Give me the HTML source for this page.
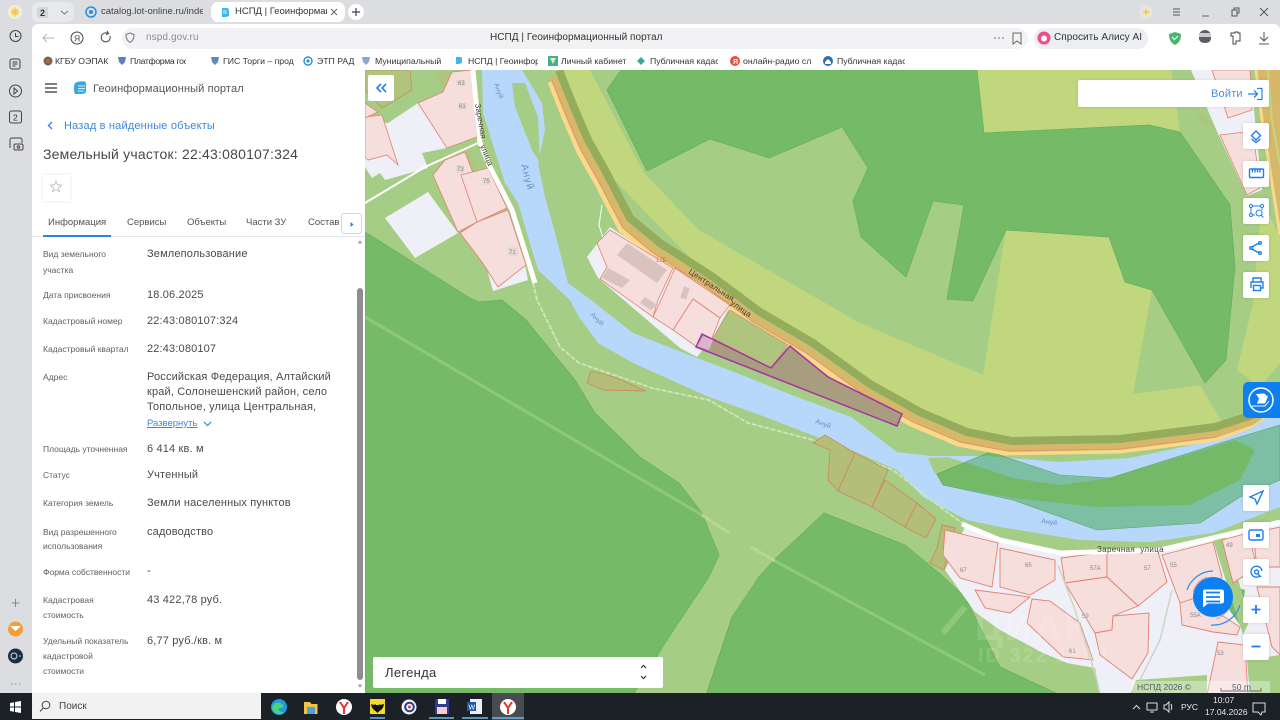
<!DOCTYPE html>
<html lang="ru"><head><meta charset="utf-8"><title>НСПД | Геоинформационный портал</title>
<style>
*{box-sizing:border-box}
html,body{margin:0;padding:0;width:1280px;height:720px;overflow:hidden;background:#dcdde1;font-family:"Liberation Sans","Noto Sans CJK SC",sans-serif}
svg{position:absolute;left:0;top:0;overflow:visible}
.t{position:absolute;white-space:nowrap;line-height:14px;height:14px}
.l{font-size:8.5px;color:#5b5f66;left:43px}
.v{font-size:11px;color:#4a4a4a;left:147px;letter-spacing:.16px;margin-top:1px}
.tab{font-size:9.5px;color:#4f5358;top:216px}
.bm{font-size:8.7px;color:#333;top:54px}
.btn{position:absolute;left:1243px;width:26px;height:26px;background:#fff;border-radius:2px;box-shadow:0 0 3px rgba(0,0,0,.15)}
.box{position:absolute;background:#fff}
</style></head><body>

<svg width="1280" height="720" viewBox="0 0 1280 720">
<rect x="365" y="70" width="915" height="625" fill="#a6cd86"/>
<!-- yellow-green -->
<polygon fill="#c0d77d" points="590,70 644,173 699,230 858,322 983,375 1006,230 1109,237 1125,282 1152,290 1133,394 1200,385 1224,425 1120,441 1010,443 900,405 700,268 600,165 555,70" />
<polygon fill="#c0d77d" points="977,70 1171,70 1180,132 1149,125 984,133"/>
<polygon fill="#c0d77d" points="1253,303 1237,370 1260,387 1280,363 1280,237 1262,200"/>
<!-- dark green upper -->
<polygon fill="#75bb67" stroke="#68ad5c" stroke-width=".7" points="607,90 621,70 977,70 984,133 1149,125 1180,132 1230,205 1235,267 1226,360 1205,383 1152,290 1125,282 1109,237 1006,230 973,301 947,299 964,205 933,201 906,277 861,237 853,201 868,168 842,127 769,158 710,139 647,171"/>
<!-- river -->
<polygon fill="#b8d8fb" points="482,70 522,70 542,103 545,130 538,163 545,197 555,233 568,283 591,300 633,333 694,357 729,370 797,397 851,417 897,452 930,456 985,456 1060,462 1130,458 1215,440 1280,405 1280,507 1213,533 1150,542 1080,540 1000,527 967,520 923,497 897,470 851,450 817,437 760,415 709,397 633,363 598,343 579,317 570,300 538,270 518,203 505,183 483,113"/>
<polygon fill="#a6cd86" points="512,83 525,83 538,117 540,163 532,150 515,107"/>
<polygon fill="#a6cd86" points="928,458 947,457 980,467 1013,478 1060,485 1110,478 1170,460 1235,440 1255,450 1240,480 1190,505 1097,507 1013,498 943,485 933,470"/>
<polygon fill="#39a344" fill-opacity=".47" stroke="#5aa55a" stroke-width=".6" points="937,474 990,452 1060,475 1110,478 1230,440 1280,425 1280,480 1240,497 1200,523 1097,530 1013,500 943,485"/>
<!-- road -->
<path fill="none" stroke="#fbd98a" stroke-width="5" d="M550,82L564,117 579,152 596,182 621,230 651,255 704,289 751,324 804,355 861,396 911,424 958,444 1005,453 1120,451 1215,439 1250,426 1280,405"/>
<path fill="none" stroke="#d7b76a" stroke-width="8" d="M554,77L568,112 583,147 600,177 625,225 655,250 708,284 755,319 808,350 865,391 915,419 962,439 1010,448 1120,446 1215,434 1252,421 1280,400"/>
<path fill="none" stroke="#94ac5c" stroke-width="8" d="M559,70L573,105 588,140 605,170 630,218 660,243 713,277 760,312 813,343 870,384 920,412 967,432 1012,441 1120,439 1215,427 1255,414 1280,393"/>
<path fill="none" stroke="#e58f6b" stroke-width=".7" d="M552,80L566,115 581,150 598,180 623,228 653,253 706,287 753,322 806,353 863,394 913,422 960,442 1008,451 1120,449 1215,437"/>
<!-- right road -->
<polygon fill="#d7b76a" points="1256,70 1280,70 1280,235 1270,170 1262,120"/>
<path fill="none" stroke="#fbd98a" stroke-width="3" d="M1256,70L1262,120 1270,170 1280,235"/>
<path fill="none" stroke="#c0d77d" stroke-width="2" d="M1268,70L1272,120 1280,165"/>
<!-- dark green left -->
<polygon fill="#75bb67" stroke="#68ad5c" stroke-width=".7" points="365,232 470,298 478,302 502,300 526,320 575,380 595,413 640,457 679,483 702,513 719,555 709,577 667,640 633,695 365,695"/>
<polygon fill="#75bb67" stroke="#68ad5c" stroke-width=".7" points="824,513 905,545 939,573 965,597 1000,667 1060,695 706,695 732,617 759,577 774,560"/>
<path stroke="#8fc87c" stroke-width="3" d="M365,317L702,515"/><path stroke="#b7d88f" stroke-width="3" d="M702,515L729,533"/>
<path stroke="#b7d88f" stroke-width="3" d="M751,547L775,561"/><path stroke="#8fc87c" stroke-width="3" d="M775,561L985,675"/>
<path stroke="#8fc87c" stroke-width="6" d="M965,607L943,633"/>
<path fill="none" stroke="#d2e4bb" stroke-width="1.8" stroke-dasharray="5 1.5" d="M530,270L537,300 560,347 579,363 652,388 709,400 748,423 813,440 893,470 935,503 962,523"/>
<!-- NW parcels -->
<polygon fill="#afc47d" stroke="#c98c5c" stroke-width=".8" points="365,90 382,108 412,90 410,70 365,70"/>
<polygon fill="#eff0f7" points="388,123 418,103 447,148 422,153 428,168 385,180 380,173 372,178 365,167 365,120"/>
<polygon fill="#eff0f7" points="385,218 428,192 458,233 415,258"/>
<polygon fill="#eff0f7" points="488,273 525,265 528,280 493,291"/>
<polygon fill="#afc47d" points="434,70 443,92 452,72"/>
<polygon fill="#afc47d" points="465,152 474,173 478,170 470,150"/>
<polygon fill="#afc47d" points="458,233 482,262 477,240"/>
<g fill="#f6dedd" stroke="#e2806f" stroke-width=".8">
<polygon points="365,117 382,115 398,165 387,155 368,160 365,157"/>
<polygon points="365,103 378,112 365,118"/>
<polygon points="418,103 443,92 452,72 472,70 477,137 447,148"/>
<polygon points="433,175 445,160 465,152 473,173 488,168 507,208 477,222 458,232"/>
<polygon points="461,175 488,168 507,208 477,222"/>
<polygon points="477,222 508,210 526,265 498,287 482,262 460,233"/>
</g>
<g fill="#e5d9d6"><rect x="456" y="80" width="9" height="6"/><rect x="458" y="103" width="9" height="7"/><rect x="456" y="165" width="8" height="8"/><rect x="482" y="178" width="8" height="7"/><rect x="508" y="247" width="10" height="9"/></g>
<path fill="none" stroke="#fff" stroke-width="5" d="M473,70L480,143 490,167 512,210 535,283"/>
<path fill="none" stroke="#fff" stroke-width="2" d="M365,203L425,167 478,143"/>
<path fill="none" stroke="#fff" stroke-width="1" d="M602,205L599,225 603,238"/>
<!-- factory -->
<polygon fill="#eff0f7" points="587,257 610,227 730,307 713,337 697,357 680,348 598,278"/>
<polygon fill="#afc47d" stroke="#e2806f" stroke-width=".6" points="730,310 788,345 771,368 713,338"/>
<g fill="#f6dedd" stroke="#e2806f" stroke-width=".8">
<polygon points="597,243 610,230 673,268 658,300 653,317 600,279 607,267"/>
<polygon points="675,268 730,305 720,318 693,299 673,330 653,317 661,300"/>
<polygon points="693,299 720,318 712,338 697,347 673,330"/>
</g>
<g fill="#d9c3bf"><polygon points="627,243 667,270 657,283 617,255"/><polygon points="608,268 630,280 622,288 602,278"/><polygon points="645,297 657,305 651,310 640,303"/><rect x="682" y="287" width="6" height="12" transform="rotate(18 685 293)"/></g>
<!-- target -->
<polygon fill="#a99d80" stroke="#a82fa5" stroke-width="1.5" points="702,334 771,368 790,346 828,377 902,414 897,426 696,347"/>
<polygon fill="#dcb3d1" points="703,336 713,340 709,350 697,346"/>
<!-- tan parcels -->
<g fill="#b3bf79" stroke="#cd8a5c" stroke-width=".9">
<polygon points="591,371 587,383 604,390 646,391 614,377"/>
<polygon points="825,435 813,443 830,450 828,480 838,491 855,453"/>
<polygon points="855,453 888,470 872,507 838,491"/>
<polygon points="885,480 917,503 905,527 872,507"/>
<polygon points="917,503 936,519 926,538 905,527"/>
<polygon points="942,525 955,528 944,570 930,563 937,548"/>
</g>
<!-- top-right parcels -->
<polygon fill="#eff0f7" points="1191,70 1250,70 1262,190 1247,196 1215,127"/>
<polygon fill="#f6dedd" stroke="#e2806f" stroke-width=".8" points="1220,135 1253,131 1260,188 1247,195"/>
<polygon fill="#f6dedd" stroke="#e2806f" stroke-width=".8" points="1212,70 1250,70 1252,110 1228,118"/>
<polygon fill="#afc47d" points="1192,110 1205,118 1215,127 1205,125"/>
<!-- settlement -->
<polygon fill="#eff0f7" points="965,527 1000,542 1060,555 1160,552 1213,540 1280,524 1280,695 1100,695 1095,668 1067,663 1043,653 1000,630 975,612 945,570"/>
<polygon fill="#a6cd86" points="1130,695 1136,680 1207,675 1207,695"/>
<polygon fill="#a6cd86" points="1247,660 1280,655 1280,695 1250,695"/>
<polygon fill="#75bb67" points="1230,585 1245,590 1240,625 1222,600"/>
<polygon fill="#a6cd86" points="1213,540 1225,535 1250,620 1243,635"/>
<g fill="#f6dedd" stroke="#e2806f" stroke-width=".9">
<polygon points="945,530 998,543 992,587 960,578 943,555"/>
<polygon points="1000,548 1055,560 1055,580 1030,595 1000,587"/>
<polygon points="975,590 1030,597 1010,613 985,608"/>
<polygon points="1061,558 1107,552 1107,577 1065,583"/>
<polygon points="1107,552 1158,552 1167,582 1138,606 1107,577"/>
<polygon points="1065,583 1107,577 1138,606 1113,616 1112,630 1095,633"/>
<polygon points="1113,616 1149,613 1148,653 1132,679 1100,655 1095,633 1112,630"/>
<polygon points="1032,599 1050,601 1080,623 1093,660 1063,657 1027,623"/>
<polygon points="1162,555 1213,542 1222,577 1200,597 1180,603"/>
<polygon points="1180,603 1195,598 1240,627 1237,635 1213,632 1182,625"/>
<polygon points="1222,540 1248,533 1257,567 1233,583"/>
<polygon points="1253,533 1280,527 1280,567 1257,567"/>
<polygon points="1257,587 1280,587 1280,655 1272,647"/>
<polygon points="1218,642 1245,645 1248,695 1207,695"/>
</g>
<path fill="none" stroke="#fff" stroke-width="5" d="M962,524L1000,540 1060,553 1160,550 1213,538 1280,522"/>
<path fill="none" stroke="#c9d6c4" stroke-width="1.5" d="M1058,565L1075,610 1097,680 1100,695M1172,590L1160,640 1140,680"/>
<!-- labels on map -->
<g font-family="Liberation Sans" fill="#6a8fc5">
<text font-size="7" transform="translate(494,84) rotate(70)">Ануй</text>
<text font-size="10" transform="translate(521,165) rotate(75)" letter-spacing="1">Ануй</text>
<text font-size="7" transform="translate(590,315) rotate(45)">Ануй</text>
<text font-size="7" transform="translate(815,423) rotate(20)">Ануй</text>
<text font-size="7" transform="translate(1041,523) rotate(8)">Ануй</text>
</g>
<g font-family="Liberation Sans" fill="#4a3d30" font-size="8">
<text transform="translate(475,104) rotate(80)">Заречная</text>
<text transform="translate(480,146) rotate(68)">улица</text>
<text transform="translate(688,273) rotate(33)" letter-spacing=".3">Центральная</text>
<text transform="translate(730,304) rotate(35)" letter-spacing=".3">улица</text>
<text x="1097" y="552" letter-spacing=".35">Заречная&#160;&#160;улица</text>
</g>
<g font-family="Liberation Sans" fill="#8c8483" font-size="6">
<text x="458" y="85">63</text><text x="459" y="108">61</text><text x="457" y="171">73</text><text x="483" y="183">75</text><text x="509" y="254">71</text><text x="656" y="262">17Б</text>
<text x="960" y="572">67</text><text x="1025" y="567">65</text><text x="1090" y="570">57А</text><text x="1144" y="570">57</text><text x="1170" y="567">55</text><text x="1082" y="618">59</text><text x="1069" y="653">61</text><text x="1190" y="617">55А</text><text x="1226" y="547">49</text><text x="1217" y="655">53</text>
</g>
<g font-family="Liberation Sans" fill="#fff" opacity=".12"><text x="975" y="640" font-size="38" font-weight="bold" letter-spacing="2">ЦИАН</text><text x="978" y="662" font-size="20" font-weight="bold" letter-spacing="2">ID 322 1580</text></g>
<rect x="1132" y="681" width="138" height="12" fill="#fff" opacity=".35"/>
<text x="1137" y="690" font-size="8.5" fill="#52606e" font-family="Liberation Sans">НСПД 2026 ©</text>
<text x="1232" y="690" font-size="8.5" fill="#52606e" font-family="Liberation Sans">50 m</text>
<path fill="none" stroke="#444" stroke-width=".7" d="M1221,688v3h40v-3"/>
</svg>

<!-- chrome backgrounds -->
<div class="box" style="left:32px;top:24px;width:1248px;height:46px;border-radius:6px 6px 0 0"></div>
<div class="box" style="left:122px;top:28px;width:906px;height:21px;border-radius:11px;background:#f2f2f4"></div>
<div class="box" style="left:1034px;top:28px;width:114px;height:21px;border-radius:11px;background:#eceef2"></div>
<div class="box" style="left:32px;top:70px;width:333px;height:623px"></div>
<div class="box" style="left:211px;top:2px;width:134px;height:20px;border-radius:7px"></div>
<div class="box" style="left:32px;top:2px;width:42px;height:20px;border-radius:7px;background:#e8e9ec"></div>
<div class="box" style="left:348px;top:4px;width:16px;height:16px;border-radius:50%"></div>
<div class="box" style="left:0;top:693px;width:1280px;height:27px;background:#1c2127"></div>
<div class="box" style="left:32px;top:693px;width:229px;height:26px;background:#f2f2f2"></div>
<div class="box" style="left:492px;top:693px;width:32px;height:27px;background:#484b4f"></div>
<div class="box" style="left:357px;top:288px;width:6px;height:392px;border-radius:3px;background:#8e8e8e"></div>

<!-- top bar text -->
<div class="t" style="left:101px;top:5px;font-size:9.5px;color:#444;width:102px;overflow:hidden">catalog.lot-online.ru/index</div>
<div class="t" style="left:235px;top:5px;font-size:9.5px;color:#333;width:92px;overflow:hidden">НСПД | Геоинформаци</div>
<div class="t" style="left:146px;top:31px;font-size:10px;color:#8a8d93;letter-spacing:.1px">nspd.gov.ru</div>
<div class="t" style="left:490px;top:31px;font-size:10px;color:#333;letter-spacing:.05px">НСПД | Геоинформационный портал</div>
<div class="t" style="left:1054px;top:31px;font-size:10px;color:#333;letter-spacing:.05px">Спросить Алису AI</div>

<div class="t bm" style="left:55px">КГБУ ОЭПАК</div>
<div class="t bm" style="left:130px;width:56px;overflow:hidden;letter-spacing:-.35px">Платформа госуд</div>
<div class="t bm" style="left:223px;width:71px;overflow:hidden">ГИС Торги – прод</div>
<div class="t bm" style="left:317px">ЭТП РАД</div>
<div class="t bm" style="left:375px;width:66px;overflow:hidden">Муниципальный</div>
<div class="t bm" style="left:468px;width:70px;overflow:hidden">НСПД | Геоинфор</div>
<div class="t bm" style="left:561px">Личный кабинет</div>
<div class="t bm" style="left:650px;width:68px;overflow:hidden">Публичная кадас</div>
<div class="t bm" style="left:743px;width:70px;overflow:hidden">онлайн-радио сл</div>
<div class="t bm" style="left:837px;width:68px;overflow:hidden">Публичная кадас</div>

<!-- panel text -->
<div class="t" style="left:93px;top:82px;font-size:11px;color:#555;letter-spacing:.12px">Геоинформационный портал</div>
<div class="t" style="left:64px;top:119px;font-size:11px;color:#3a86e0;letter-spacing:.18px">Назад в найденные объекты</div>
<div class="t" style="left:43px;top:147px;font-size:14px;color:#484848;letter-spacing:.2px">Земельный участок: 22:43:080107:324</div>
<div class="t tab" style="left:48px">Информация</div>
<div class="t tab" style="left:127px">Сервисы</div>
<div class="t tab" style="left:187px">Объекты</div>
<div class="t tab" style="left:246px">Части ЗУ</div>
<div class="t tab" style="left:308px">Состав</div>
<div class="box" style="left:32px;top:236px;width:333px;height:1px;background:#e3e8ef"></div>
<div class="box" style="left:43px;top:235px;width:68px;height:2px;background:#2f80e4"></div>
<div class="box" style="left:341px;top:213px;width:21px;height:21px;border:1px solid #c6dcf5;border-radius:3px"></div>
<div class="box" style="left:43px;top:175px;width:27px;height:26px;box-shadow:0 0 3px rgba(0,0,0,.12)"></div>

<div class="t l" style="top:247px">Вид земельного</div><div class="t l" style="top:263px">участка</div><div class="t v" style="top:246px">Землепользование</div>
<div class="t l" style="top:288px">Дата присвоения</div><div class="t v" style="top:287px">18.06.2025</div>
<div class="t l" style="top:314px">Кадастровый номер</div><div class="t v" style="top:313px">22:43:080107:324</div>
<div class="t l" style="top:342px">Кадастровый квартал</div><div class="t v" style="top:341px">22:43:080107</div>
<div class="t l" style="top:370px">Адрес</div>
<div class="t v" style="top:369px">Российская Федерация, Алтайский</div>
<div class="t v" style="top:384px">край, Солонешенский район, село</div>
<div class="t v" style="top:399px">Топольное, улица Центральная,</div>
<div class="t" style="left:147px;top:417px;font-size:9.5px;color:#3a86e0;text-decoration:underline">Развернуть</div>
<div class="t l" style="top:442px">Площадь уточненная</div><div class="t v" style="top:441px">6 414 кв. м</div>
<div class="t l" style="top:468px">Статус</div><div class="t v" style="top:467px">Учтенный</div>
<div class="t l" style="top:496px">Категория земель</div><div class="t v" style="top:495px">Земли населенных пунктов</div>
<div class="t l" style="top:525px">Вид разрешенного</div><div class="t l" style="top:539px">использования</div><div class="t v" style="top:524px">садоводство</div>
<div class="t l" style="top:565px">Форма собственности</div><div class="t v" style="top:563px">-</div>
<div class="t l" style="top:593px">Кадастровая</div><div class="t l" style="top:608px">стоимость</div><div class="t v" style="top:592px">43 422,78 руб.</div>
<div class="t l" style="top:634px">Удельный показатель</div><div class="t l" style="top:649px">кадастровой</div><div class="t l" style="top:664px">стоимости</div><div class="t v" style="top:633px">6,77 руб./кв. м</div>

<!-- map controls -->
<div class="box" style="left:368px;top:75px;width:26px;height:26px;border-radius:2px"></div>
<div class="box" style="left:1078px;top:80px;width:191px;height:27px;border-radius:2px;box-shadow:0 0 3px rgba(0,0,0,.1)"></div>
<div class="t" style="left:1211px;top:87px;font-size:11px;color:#4a90e2;letter-spacing:.2px">Войти</div>
<div class="box" style="left:373px;top:657px;width:290px;height:31px;border-radius:2px"></div>
<div class="t" style="left:385px;top:666px;font-size:13px;color:#333;letter-spacing:.3px">Легенда</div>
<div class="btn" style="top:123px"></div><div class="btn" style="top:161px"></div><div class="btn" style="top:198px"></div><div class="btn" style="top:235px"></div><div class="btn" style="top:272px"></div>
<div class="btn" style="top:485px"></div><div class="btn" style="top:522px"></div><div class="btn" style="top:559px"></div><div class="btn" style="top:597px"></div><div class="btn" style="top:634px"></div>
<div class="box" style="left:1243px;top:382px;width:37px;height:36px;background:#0d7ff0;border-radius:5px 0 0 5px"></div>

<!-- taskbar text -->
<div class="t" style="left:59px;top:700px;font-size:10px;color:#444">Поиск</div>
<div class="t" style="left:1181px;top:700px;font-size:8.5px;color:#e6e6e6">РУС</div>
<div class="t" style="left:1213px;top:693px;font-size:8.5px;color:#e6e6e6">10:07</div>
<div class="t" style="left:1205px;top:705px;font-size:8.5px;color:#e6e6e6">17.04.2026</div>

<!-- icons -->
<svg width="1280" height="720" viewBox="0 0 1280 720" fill="none">
<!-- top bar -->
<circle cx="15" cy="12" r="7" fill="#f3efd8"/><path d="M15 7.5v9M10.5 12h9M12 9l6 6M18 9l-6 6" stroke="#f3c84a" stroke-width="1.4"/>
<rect x="37" y="7" width="11" height="11" rx="2" fill="#d5d6da"/><text x="40" y="16" font-size="9" font-family="Liberation Sans" fill="#333" font-weight="bold">2</text>
<path d="M61 11l3.500 3 3.500-3" stroke="#777" stroke-width="1"/>
<circle cx="91" cy="12" r="5" stroke="#2a8de0" stroke-width="1.5"/><circle cx="91" cy="12" r="2" fill="#2a8de0"/>
<path d="M222 8h6l1 2v6l-3 1h-4z" fill="#3fb6e8"/><path d="M223 11h4M223 13h4" stroke="#fff" stroke-width=".8"/>
<path d="M331 9l6 6M337 9l-6 6" stroke="#666"/>
<path d="M356 8v8M352 12h8" stroke="#444" stroke-width="1.2"/>
<circle cx="1146" cy="12" r="6.500" fill="#e8e6d8"/><path d="M1146 9v6M1143 12h6" stroke="#f0c83c" stroke-width="1.4"/>
<path d="M1173 9h7M1173 12h7M1173 15h7" stroke="#555"/>
<path d="M1202 16h7" stroke="#666"/>
<path d="M1232 10h5v6h-5zM1234 10V8h5v5h-2" stroke="#555"/>
<path d="M1260 8l8 8M1268 8l-8 8" stroke="#555"/>
<!-- toolbar -->
<path d="M54 38H43M47 34l-4 4 4 4" stroke="#b0b3b8"/>
<circle cx="77" cy="38" r="6" stroke="#444"/><text x="74" y="41.500" font-size="8.500" font-family="Liberation Sans" fill="#444">Я</text>
<path d="M110 36a4.500 4.500 0 1 1-2-2.500M107 31l1.500 2.500-2.500 1" stroke="#444"/>
<path d="M130 33l4 1.500c0 4-1 6-4 8-3-2-4-4-4-8z" stroke="#777"/>
<path d="M994 38h2M998 38h2M1002 38h2" stroke="#777"/>
<path d="M1013 33h8v11l-4-3-4 3z" stroke="#666"/>
<circle cx="1044" cy="38" r="6.500" fill="#ef4f86"/><circle cx="1044" cy="38.500" r="3" fill="#fff"/>
<path d="M1175 32l6 2c0 6-2 9-6 11-4-2-6-5-6-11z" fill="#4bb56d"/><path d="M1172 37l2.500 2.500 3.500-3.500" stroke="#fff" stroke-width="1.200"/>
<path d="M1199 36a6 6 0 0 1 12 0v2c0 3-2 5-6 5s-6-2-6-5z" fill="#5a5d61"/><rect x="1199" y="33" width="12" height="4" fill="#c9cbce"/>
<path d="M1231 33h4v-1h3v1h2v8h-4v3h-3v-8h-2z" stroke="#444"/>
<path d="M1264 32v9M1260 37l4 4 4-4M1259 44h10" stroke="#555"/>
<!-- bookmarks -->
<circle cx="48" cy="61" r="4.500" fill="#6b6b50"/><circle cx="48" cy="61" r="2" fill="#d05a3b"/>
<path d="M118 57h8l-1 5-3 3-3-3z" fill="#5f7fb8"/><path d="M211 57h8l-1 5-3 3-3-3z" fill="#5b8ac6"/>
<circle cx="308" cy="61" r="4" stroke="#2a8de0" stroke-width="1.400"/><circle cx="308" cy="61" r="1.600" fill="#2a8de0"/>
<path d="M362 57h8l-1 5-3 3-3-3z" fill="#8ba8cf"/>
<path d="M456 57h5l1 1v5l-3 1h-3z" fill="#3fb6e8"/>
<rect x="548" y="56" width="10" height="10" fill="#3db0a0"/><path d="M550 58h6l-3 6z" fill="#e8f4a0"/>
<path d="M637 61l4-4 4 4-4 4z" fill="#3aa7a0"/>
<circle cx="735" cy="61" r="5" fill="#e8503f"/><text x="733" y="64" font-size="7" font-family="Liberation Sans" fill="#fff" font-weight="bold">Я</text>
<circle cx="828" cy="61" r="5" fill="#2f6db3"/><path d="M825 62l3-3 3 3v2h-6z" fill="#fff"/>
<!-- sidebar -->
<g stroke="#444"><circle cx="15.500" cy="36" r="5.500"/><path d="M15.500 33v3.500h3"/>
<rect x="10" y="59" width="10" height="10" rx="2"/><path d="M12.500 62h5M12.500 64h5M12.500 66h3"/>
<circle cx="15.500" cy="91" r="6"/><path d="M14 88l3.500 3-3.500 3z"/>
<rect x="9.500" y="111" width="12" height="12" rx="2"/>
<path d="M10 148v-8a2 2 0 0 1 2-2h8a2 2 0 0 1 2 2v3"/><rect x="14" y="144" width="9" height="6" rx="1.500" fill="#dcdde1"/><circle cx="18.500" cy="147" r="1.300"/></g>
<text x="13" y="120.500" font-size="8.500" font-family="Liberation Sans" fill="#333">2</text>
<path d="M15.500 599v8M11.500 603h8" stroke="#888"/>
<circle cx="15.500" cy="629" r="7.500" fill="#f2a035"/><path d="M10 626h11l-5.500 5z" fill="#fff"/>
<circle cx="15.500" cy="656" r="7.500" fill="#1e2d3d"/><circle cx="14" cy="656" r="3" stroke="#d5dde5"/><circle cx="20" cy="656" r="1" fill="#33d17a"/>
<path d="M11 684h1.500M15 684h1.500M19 684h1.500" stroke="#888"/>
<!-- panel icons -->
<path d="M45 84h12M45 88h12M45 92h12" stroke="#333" stroke-width="1.300"/>
<path d="M75 83c2-1.500 6-2 10-1.500l1 2v8c0 1.500-2 2.500-6 2.500h-5c-1.500-3-1.500-8 0-11z" fill="#36a8e6"/><path d="M78 86h7M78 88.500h7M78 91h6" stroke="#d6f0fc" stroke-width=".9"/>
<path d="M52 122l-3.500 3.500 3.500 3.500" stroke="#3a86e0" stroke-width="1.400"/>
<path d="M56 181l1.500 3.800 4 .3-3.100 2.600 1 4-3.400-2.200-3.400 2.200 1-4-3.100-2.600 4-.3z" stroke="#c4c4c4"/>
<path d="M350.500 222l3 2.500-3 2.500z" fill="#2f80e4"/>
<path d="M360 240l-2.500 3.500h5z" fill="#aaa"/><path d="M360 688l-2.500-3.500h5z" fill="#aaa"/>
<path d="M204 422l3.500 3.500 3.500-3.500" stroke="#3a86e0" stroke-width="1.200"/>
<!-- map controls -->
<path d="M381 84l-4 4 4 4M386 84l-4 4 4 4" stroke="#1f7fe8" stroke-width="1.600"/>
<path d="M1248 94h9M1254 90.500l3.500 3.500-3.500 3.500" stroke="#2a83e6" stroke-width="1.300"/><path d="M1257 88.500h5v11h-5" stroke="#2a83e6" stroke-width="1.200"/>
<path d="M641 668l2.500-2.500 2.500 2.500M641 676l2.500 2.500 2.500-2.500" stroke="#333" stroke-width="1.200"/>
<g stroke="#1f7fe8" stroke-width="1.400">
<path d="M1256 131l4.500 4.500-4.500 4.500-4.500-4.500z"/><path d="M1251.500 139l4.500 3.500 4.500-3.500"/>
<rect x="1249.500" y="169" width="14" height="8.500" rx="1"/><path d="M1252.500 169.500v3M1255 169.500v3M1257.500 169.500v3M1260 169.500v3"/>
<g stroke-width="1"><circle cx="1251" cy="206" r="1.500"/><circle cx="1262" cy="206" r="1.500"/><circle cx="1251" cy="215" r="1.500"/><path d="M1253 206h7M1251 208v5M1262 208v2M1253 215h2"/><circle cx="1259" cy="213" r="3"/><path d="M1261 215l2.500 2.500"/></g>
<circle cx="1251" cy="248" r="1.300"/><circle cx="1260" cy="243" r="1.300"/><circle cx="1260" cy="253" r="1.300"/><path d="M1252 247l7-4M1252 249l7 4"/>
<path d="M1251 288v-6h12v6h-2.500M1253 282v-4h8v4"/><rect x="1253.500" y="285.500" width="7" height="5"/>
<path d="M1263 491l-13 6 5 2 2 5z"/>
<rect x="1249" y="530" width="14" height="10" rx="1.500"/><rect x="1256" y="534" width="4" height="3" fill="#1f7fe8" stroke="none"/>
<path d="M1262 571a5.500 5.500 0 1 0-2 5"/><circle cx="1256.500" cy="572" r="2"/><path d="M1258 574l3 3"/>
<path d="M1256 605v9M1251.500 609.500h9" stroke-width="1.800"/>
<path d="M1251.500 646.500h9" stroke-width="1.800"/>
</g>
<!-- blue side button -->
<circle cx="1261" cy="400" r="12" stroke="#fff" stroke-width="1.500" fill="#0d7ff0"/>
<path d="M1256 394l8-.500 4 3-3 7h-8l2-5z" fill="#fff"/><path d="M1252 406h13l4-5" stroke="#fff"/>
<!-- chat button -->
<path d="M1187 590a28 28 0 0 1 26-19" stroke="#2d8cee" stroke-width="1.200"/><path d="M1240 605a28 28 0 0 1-29 20" stroke="#2d8cee" stroke-width="1.200"/>
<path d="M1193 592a21 21 0 0 1 14-15" stroke="#f2a39b" stroke-width="1"/><path d="M1230 605a21 21 0 0 1-14 14" stroke="#f2a39b" stroke-width="1"/>
<circle cx="1213" cy="597" r="20" fill="#0d7ff0"/>
<path d="M1204 589.500h18a2.500 2.500 0 0 1 2 2v10a2.500 2.500 0 0 1-2 2h-14l-5 4v-16a2.500 2.500 0 0 1 1-2z" fill="#fff"/>
<path d="M1206 592.500h14M1206 597h14M1206 601.500h14" stroke="#0d7ff0" stroke-width="1.700"/>
<!-- taskbar -->
<path d="M10 703l4-.7v4.200h-4zM15 702l6-1v5.500h-6zM10 707.500h4v4.200l-4-.7zM15 707.500h6v5.500l-6-1z" fill="#fff"/>
<circle cx="46" cy="705" r="3.800" stroke="#444"/><path d="M43.300 708l-3.300 3.500" stroke="#444"/>
<circle cx="279" cy="707" r="8" fill="#1b9de2"/><path d="M272 708c1-6 8-7 11-3 1.500 2-.5 3-2.500 3-3.500 0-1.500 4 3.500 4.500-3 3-10.500 2-12-4.500z" fill="#4fd07c"/>
<path d="M304 702h6l1.500 2h6v10h-13.500z" fill="#f5c243"/><rect x="307" y="707" width="8" height="7" fill="#4aa3df"/>
<circle cx="344" cy="707" r="8" fill="#fff"/><path d="M340 702l4 6 4-6M344 708v6" stroke="#e8322c" stroke-width="2"/>
<rect x="370" y="699" width="15" height="15" fill="#f4d92f"/><path d="M371 704c3 1 4 1 4 0 1 1.500 4 1.500 5 0 0 1 1 1 4 0-1 6-3 5-6.500 9-3.500-4-5.500-3-6.500-9z" fill="#111"/>
<path d="M370 718h15" stroke="#6fb7e8" stroke-width="1.500"/>
<circle cx="409" cy="707" r="7.500" fill="#f1f3f8"/><circle cx="409.500" cy="707" r="4.300" stroke="#2a3e86" stroke-width="2"/><circle cx="409.500" cy="707" r="1.500" fill="#e23b3b"/>
<rect x="435" y="699" width="14" height="15" fill="#2e3d8e"/><rect x="438" y="699" width="8" height="5" fill="#fff"/><rect x="437" y="707" width="10" height="7" fill="#f3cdd3"/>
<path d="M429 718h25M462 718h26M492 718h32" stroke="#6fb7e8" stroke-width="1.500"/>
<rect x="470" y="699" width="12" height="15" fill="#e9eef7"/><rect x="467" y="702" width="9" height="9" fill="#2156a8"/><text x="468.500" y="709.500" font-size="7" font-family="Liberation Sans" fill="#fff">W</text>
<circle cx="508" cy="707" r="8" fill="#fff"/><path d="M504 702l4 6 4-6M508 708v6" stroke="#e8322c" stroke-width="2"/>
<g stroke="#ddd"><path d="M1133 709l3.500-3.500 3.500 3.500"/><rect x="1147" y="703" width="10" height="7"/><path d="M1150 712h4"/><path d="M1164 705v4h2l3 3v-10l-3 3zM1171 704c1 2 1 4 0 6"/><path d="M1253 703h12v9h-3l-1 3-3-3h-5z"/></g>
</svg>
</body></html>
